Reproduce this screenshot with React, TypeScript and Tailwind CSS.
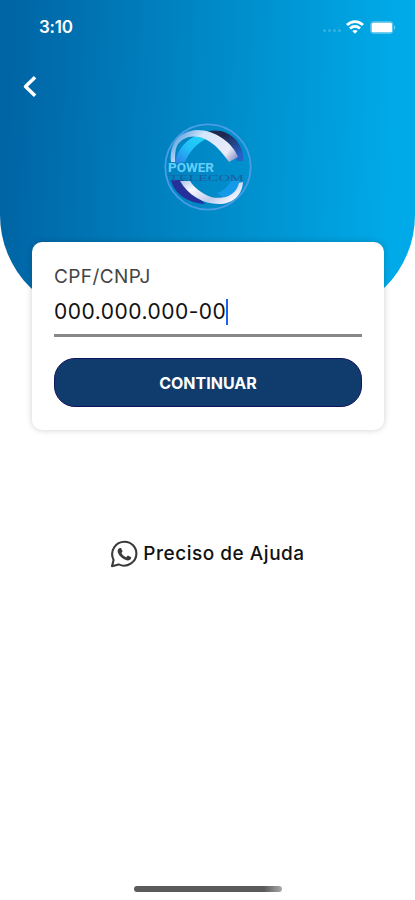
function WhatsappIcon() {
  return (
    <svg viewBox="0 0 28 28" className="w-[28px] h-[28px]" fill="none" stroke="#3a3a3a" strokeWidth="2.1">
      <path d="M2 26.2 L3.6 20 C-0.8 11 5.6 1.7 14.6 1.7 C21.2 1.7 26.4 7.1 26.4 13.6 C26.4 22.2 17.2 28.3 8.6 24.4Z" strokeLinejoin="round" />
      <path d="M9.6 8 L11 7.9 L12.6 11.3 L11.4 13 C12.6 15.1 14.2 16.5 16.2 17.3 L17.9 15.6 L21.2 17.2 C21.2 19.8 18.6 20.9 16.5 20.3 C12.4 19.1 9.4 16.2 7.9 12.8 C7.1 10.7 8.1 8.7 9.6 8Z" fill="#3a3a3a" stroke="none" />
    </svg>
  );
}

function Logo() {
  return (
    <svg viewBox="0 0 90 90" className="w-[90px] h-[90px]">
      <defs>
        <linearGradient id="topBand" x1="0" y1="0.6" x2="1" y2="1">
          <stop offset="0" stopColor="#79b4e8" />
          <stop offset="0.25" stopColor="#d3e6fa" />
          <stop offset="0.75" stopColor="#e9ecfa" />
          <stop offset="1" stopColor="#7179b8" />
        </linearGradient>
        <linearGradient id="bottomBand" x1="0" y1="0" x2="1" y2="0.5">
          <stop offset="0" stopColor="#a9c2e8" />
          <stop offset="0.3" stopColor="#f7f9ff" />
          <stop offset="0.7" stopColor="#bfcbed" />
          <stop offset="1" stopColor="#f3f7ff" />
        </linearGradient>
        <linearGradient id="cyanBand" x1="0" y1="1" x2="1" y2="0">
          <stop offset="0" stopColor="#2f7be6" />
          <stop offset="0.45" stopColor="#20bdf8" />
          <stop offset="1" stopColor="#24d7fb" />
        </linearGradient>
        <linearGradient id="darkBand" x1="0" y1="0" x2="0.6" y2="1">
          <stop offset="0.3" stopColor="#20284d" />
          <stop offset="1" stopColor="#2563c9" />
        </linearGradient>
      </defs>

      {/* Outer ring */}
      <circle cx="45" cy="45" r="42.7" fill="none" stroke="#4a9ce5" strokeWidth="1.8" />

      {/* Upper half */}
      <path d="M45 9 C56 7 66 10 73 18 C79 25 81 32 80 39 L74 39 C71 26 62 16 45 9Z" fill="url(#darkBand)" />
      <path d="M12 41 C14 27 24 17 35 13 L43 17 C34 21 26 30 22 40Z" fill="url(#cyanBand)" />
      <path d="M8 40 C6 22 16 9 34 8 C52 8 70 21 75 35 L66 40 C58 29 52 22 42 17 C30 12 19 15 14 24 C12 28 12 34 12 40Z" fill="url(#topBand)" />

      {/* Lower half */}
      <path d="M8 58 C11 71 24 81 42 82 L33 73 L20 58Z" fill="#25309a" />
      <path d="M54 71 C60 69 65 65 68 59 L78 59 C75 67 70 73 63 77Z" fill="#159ae9" />
      <path d="M17 59 L27 59 C31 66 40 72 48 75 C62 78 73 73 76 61 L80 60 C79 74 69 82 56 82 C40 82 25 73 17 59Z" fill="url(#bottomBand)" />

      <text x="5" y="49.5" fontSize="13.5" fontWeight="700" fontFamily="Roboto, sans-serif" textLength="46" lengthAdjust="spacingAndGlyphs" fill="#63cffa">POWER</text>
      <text x="6" y="58.5" fontSize="9" fontFamily="Liberation Serif, serif" textLength="75" lengthAdjust="spacingAndGlyphs" fill="#205b9d">TELECOM</text>
    </svg>
  );
}

function StatusBar() {
  return (
    <div className="flex items-center justify-between h-[54px] pl-[39px] pr-[19px] text-white">
      <span className="text-[17px] font-semibold mt-[2px] tracking-[-0.2px]">3:10</span>
      <div className="flex items-center">
        <div className="flex gap-[2px] mr-[5px] mt-[7px]">
          {[0, 1, 2, 3].map((dot) => (
            <span key={dot} className="w-[3px] h-[3px] rounded-full bg-white/20" />
          ))}
        </div>
        <svg viewBox="0 0 18 14" className="w-[18px] h-[14px] mr-[6px]" fill="none" stroke="white" strokeWidth="2.8">
          <path d="M1 5.1 C5.6 0.4 12.4 0.4 17 5.1" />
          <path d="M4 8.6 C6.9 5.8 11.1 5.8 14 8.6" />
          <path d="M6.3 11 C7.9 9.5 10.1 9.5 11.7 11 L9 13.8Z" fill="white" stroke="none" />
        </svg>
        <svg viewBox="0 0 26 13" className="w-[26px] h-[13px]">
          <rect x="0.5" y="0.5" width="22.5" height="12" rx="3" fill="white" fillOpacity="0.25" stroke="white" strokeOpacity="0.2" />
          <rect x="1.7" y="1.8" width="20.3" height="9.4" rx="1.5" fill="white" />
          <path d="M24 4.5 C25.8 5 25.8 8 24 8.5Z" fill="white" fillOpacity="0.4" />
        </svg>
      </div>
    </div>
  );
}

export default function App() {
  return (
    <div className="flex flex-col w-full h-[900px] overflow-hidden bg-white font-['Inter',sans-serif]">
      {/* Header */}
      <header className="shrink-0 h-[317px] rounded-b-[102px] bg-[linear-gradient(92deg,#0065a5_3%,#0084c2_43%,#00aae8_94%)]">
        <StatusBar />
        <button aria-label="Voltar" className="block ml-[22px] mt-[21px] w-[16px] h-[23px]">
          <svg viewBox="0 0 16 23" className="w-full h-full" fill="none" stroke="white" strokeWidth="3.5">
            <path d="M13.1 2.2 L3.5 11.5 L13.1 20.8" strokeLinejoin="round" />
          </svg>
        </button>
        <div className="flex justify-center mt-6">
          <Logo />
        </div>
      </header>

      {/* Login card */}
      <main className="relative shrink-0 w-[352px] h-[188px] ml-8 -mt-[75px] px-[22px] pt-[22px] rounded-[10px] bg-white shadow-[0_0_6px_rgba(0,0,0,0.2)]">
        <label className="block h-[25px] text-[19px] leading-[26px] tracking-[0.4px] text-[#444]">CPF/CNPJ</label>
        <div className="flex items-center h-[48px] border-b-[3px] border-[#888]">
          <span className="text-[21px] leading-none tracking-[0.5px] text-[#111]">000.000.000-00</span>
          <span className="w-[2px] h-[26px] bg-[#2060ee]" />
        </div>
        <button className="flex items-center justify-center w-full h-[49px] mt-[21px] rounded-[21px] border border-[#10145f] bg-[#103c6d] text-white text-base font-bold">
          CONTINUAR
        </button>
      </main>

      <button className="flex items-center justify-center gap-[5px] mt-[110px] text-[#111]">
        <WhatsappIcon />
        <span className="text-[19px] font-medium tracking-[0.52px]">Preciso de Ajuda</span>
      </button>

      {/* Home indicator */}
      <div className="mt-auto mb-[8px] mx-auto w-[148px] h-[6px] rounded-full bg-[linear-gradient(90deg,#5b5b5b_88%,#aaa)]" />
    </div>
  );
}
